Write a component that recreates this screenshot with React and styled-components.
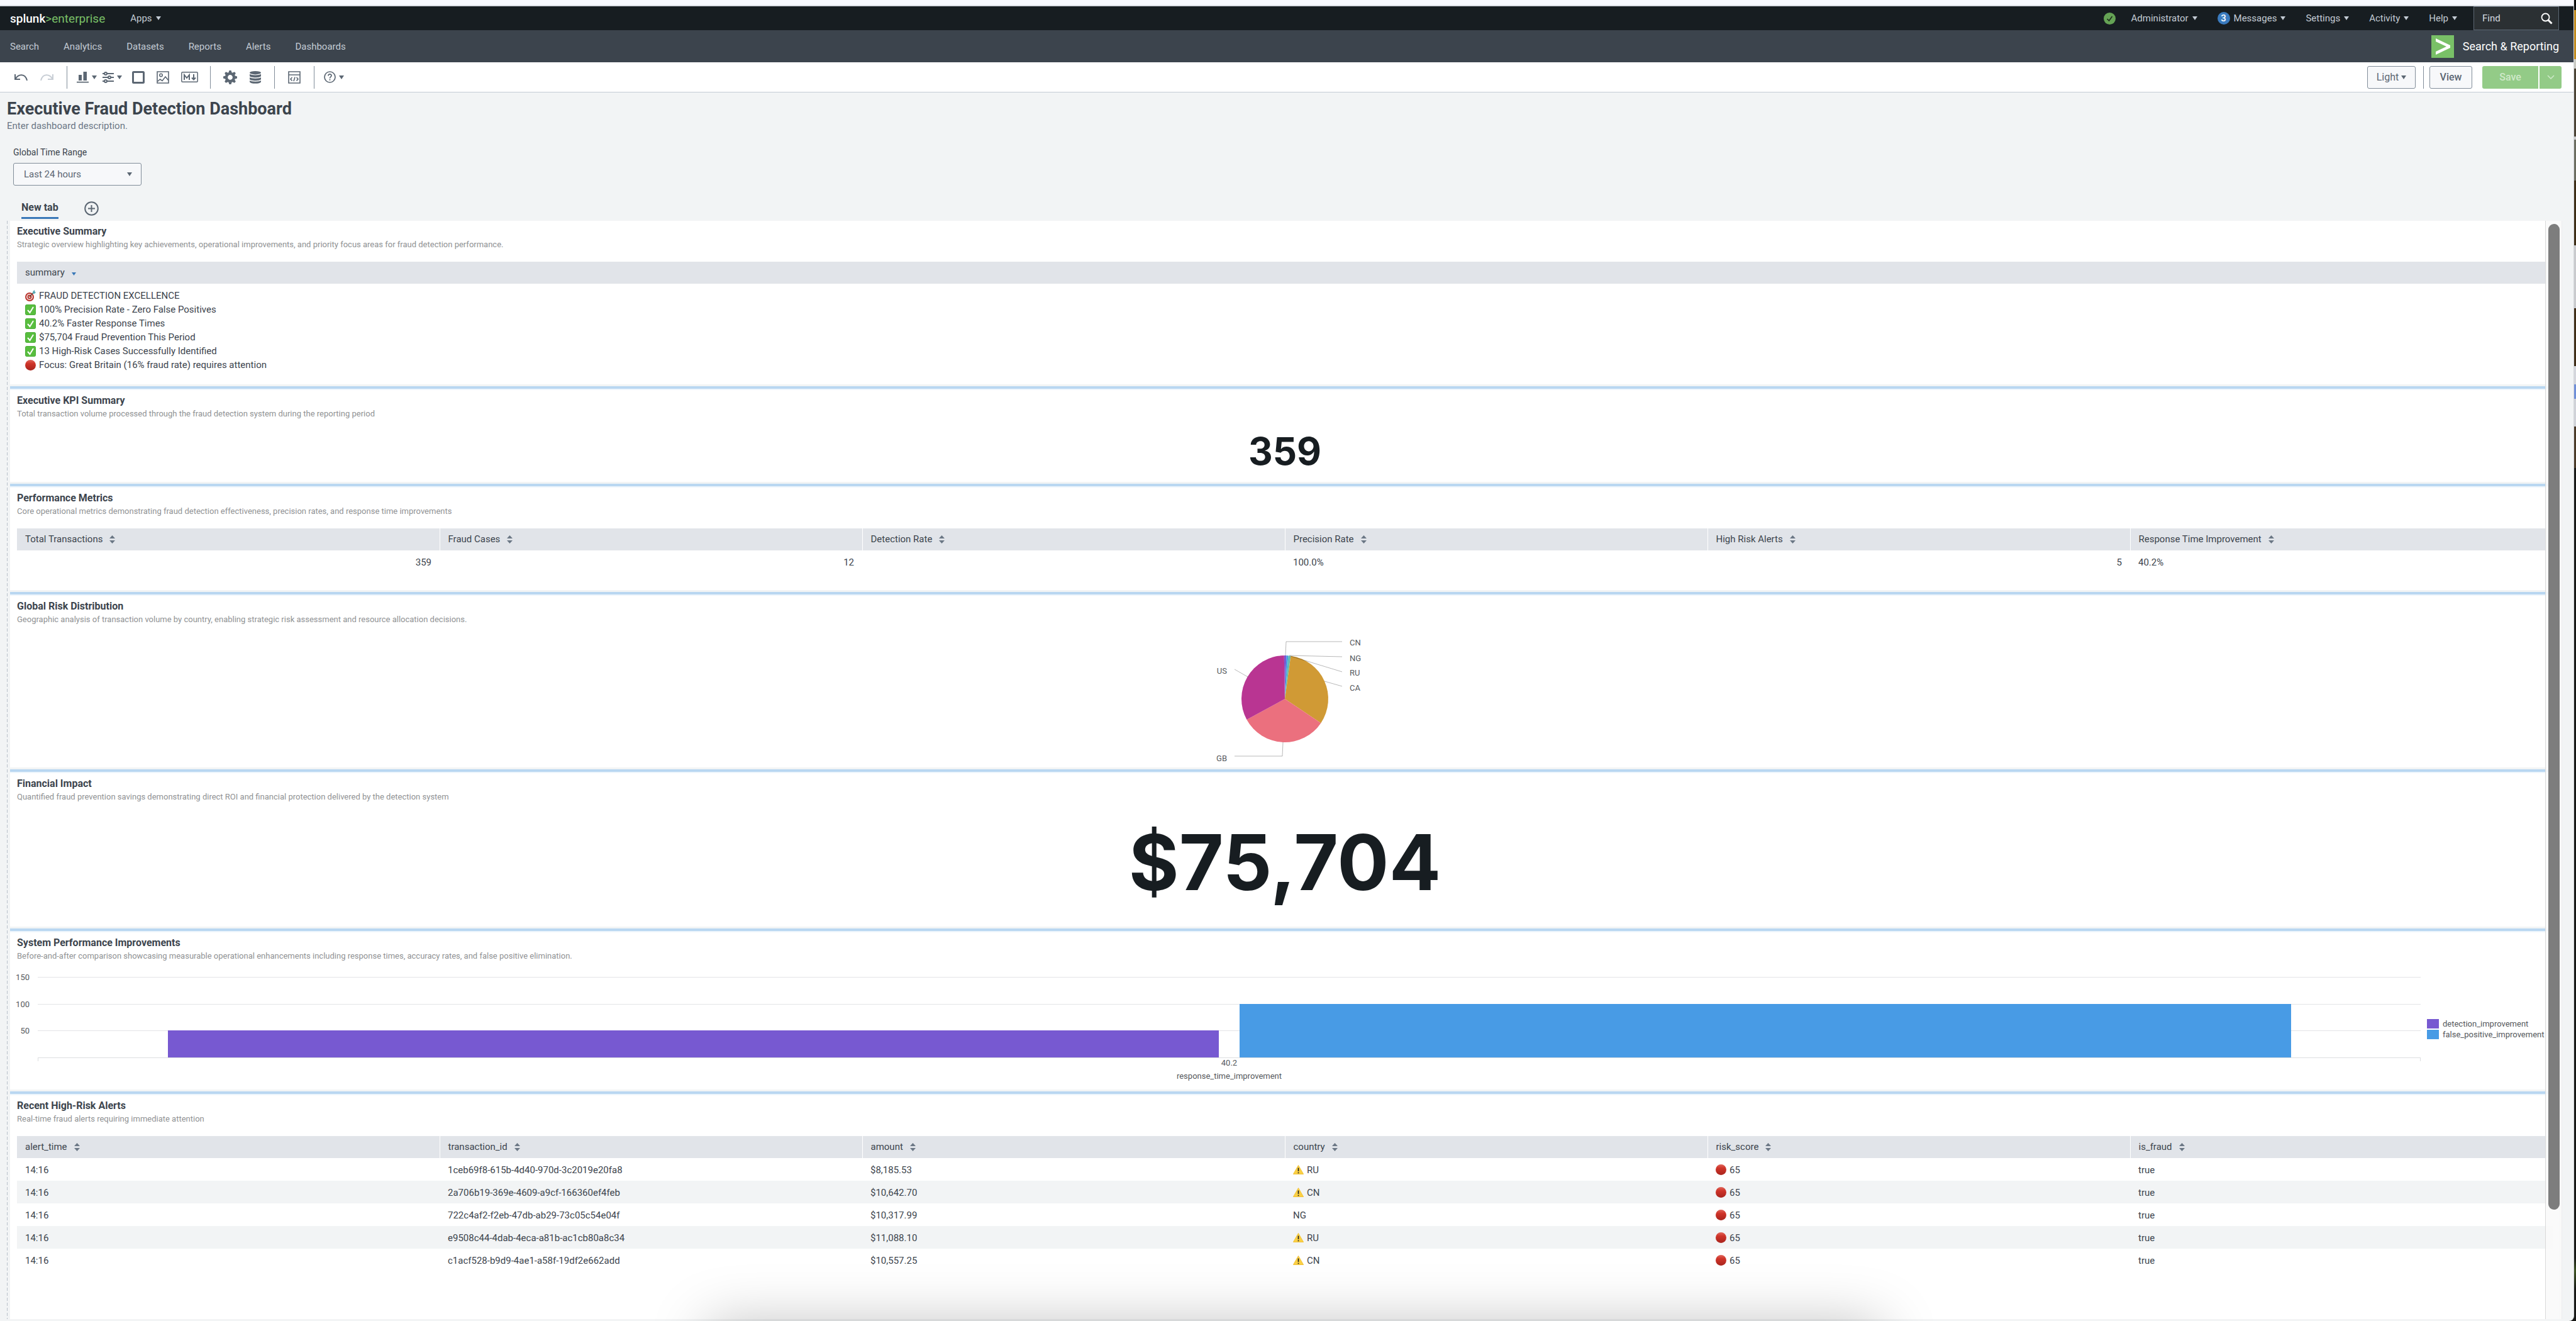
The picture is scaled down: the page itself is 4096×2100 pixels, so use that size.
import React from "react";
import styled, { createGlobalStyle } from "styled-components";

const GlobalStyle = createGlobalStyle`
  *, *::before, *::after { box-sizing: border-box; }
  html, body { margin: 0; background: #171816; }
  body, button, input, select { font-family: Roboto, "Liberation Sans", sans-serif; }
  button { margin: 0; padding: 0; border: 0; background: none; color: inherit; font-size: inherit; cursor: pointer; }
  a { color: inherit; text-decoration: none; }
  h1, h2, p { margin: 0; }
  svg { display: block; flex: none; }
`;

/* ---------- page frame ---------- */

const Page = styled.div`
  position: relative;
  display: flex;
  min-height: 100vh;
  overflow: hidden;
  color: #3c444d;
  font-size: 15px;
`;

const Window = styled.div`
  flex: 1;
  min-width: 0;
  display: flex;
  flex-direction: column;
  background: #f2f4f5;
  border-right: 1px solid #d5d8dc;
  border-bottom-right-radius: 8px;
`;

const Desktop = styled.div`
  width: 3px;
  background: linear-gradient(
    #0b0b0b 0 16px, #c08a1c 16px 94px, #c9c9c3 94px 109px, #4b4335 109px 217px,
    #cccccc 217px 222px, #6b6c60 222px 287px, #3d2e16 287px 390px, #c9cacd 390px 490px,
    #3f2e17 490px 582px, #d4d6dc 582px 611px, #6f8fd8 611px 634px, #d0d2d8 634px 678px,
    #4a3a28 678px 744px, #171816 744px 2000px, #3c5221 2020px, #171816 2050px
  );
`;

const DockShadow = styled.div`
  position: absolute;
  top: calc(100% + 4px);
  left: 27.5%;
  right: 27%;
  height: 100px;
  box-shadow: 0 0 90px rgba(0, 0, 0, 0.25);
  pointer-events: none;
`;

const BrowserEdge = styled.div`
  height: 10px;
  background: #f8f9fe;
  border-bottom: 2px solid #dde0e6;
`;

/* ---------- header ---------- */

const TopBar = styled.header`
  display: flex;
  align-items: center;
  height: 38px;
  padding: 0 23px 0 16px;
  background: #171d21;
  color: #c3cbd4;
`;

const Brand = styled.a`
  font-size: 19px;
  color: #79c067;
  margin-right: 40px;
`;

const BrandName = styled.span`
  color: #fff;
  font-weight: 500;
`;

const MenuButton = styled.button`
  display: flex;
  align-items: center;
  gap: 6px;
  line-height: 20px;
`;

const Spacer = styled.div`
  flex: 1;
`;

const TopMenu = styled.nav`
  display: flex;
  align-items: center;
  gap: 32px;
  margin-right: 26px;
`;

const Account = styled.div`
  display: flex;
  align-items: center;
  gap: 25px;
`;

const Badge = styled.span`
  width: 20px;
  height: 20px;
  border-radius: 50%;
  background: #3a7bbf;
  color: #fff;
  font-weight: 500;
  text-align: center;
`;

const FindBox = styled.form`
  display: flex;
  align-items: center;
  width: 136px;
  height: 38px;
  padding: 0 9px 0 13px;
  background: #2b3033;
  border: 1px solid #5c6773;
`;

const FindInput = styled.input`
  flex: 1;
  min-width: 0;
  padding: 0;
  border: 0;
  outline: 0;
  background: none;
  color: #e1e6eb;
  font-size: 15px;
  &::placeholder { color: #d5dae0; opacity: 1; }
`;

const NavBar = styled.nav`
  display: flex;
  align-items: center;
  gap: 39px;
  height: 51px;
  padding: 0 23px 0 16px;
  background: #3c444d;
  color: #c3cbd4;
`;

const AppName = styled.a`
  display: flex;
  align-items: center;
  gap: 14px;
  margin-left: auto;
  color: #fff;
  font-size: 18px;
`;

/* ---------- editor toolbar ---------- */

const Toolbar = styled.div`
  display: flex;
  align-items: center;
  height: 48px;
  padding: 0 19px 0 23px;
  background: #fff;
  border-bottom: 1px solid #c3cbd4;
  color: #5c6773;
`;

const ToolGroup = styled.div`
  display: flex;
  align-items: center;
  gap: ${(p) => p.$gap}px;
`;

const ToolButton = styled.button`
  display: flex;
  align-items: center;
  justify-content: center;
  gap: 5px;
  color: ${(p) => (p.disabled ? "#c8ced5" : "#5c6773")};
`;

const Divider = styled.span`
  flex: none;
  width: 1px;
  height: 36px;
  margin: 0 ${(p) => p.$after}px 0 ${(p) => p.$before}px;
  background: #818d99;
`;

const PlainButton = styled.button`
  display: flex;
  align-items: center;
  justify-content: center;
  gap: 4px;
  width: ${(p) => p.$width}px;
  height: 36px;
  border: 1px solid #818d99;
  border-radius: 3px;
  background: #f7f8fa;
  color: #5c6773;
  font-size: 16px;
  font-weight: ${(p) => (p.$strong ? 500 : 400)};
`;

const SaveGroup = styled.div`
  display: flex;
  gap: 2px;
  margin-left: 16px;
  border-radius: 3px;
  overflow: hidden;
`;

const SaveButton = styled.button`
  display: flex;
  align-items: center;
  justify-content: center;
  width: ${(p) => p.$width}px;
  height: 36px;
  background: #93cb87;
  color: #cfe9c9;
  font-size: 16px;
  font-weight: 500;
`;

/* ---------- dashboard head ---------- */

const Head = styled.div`
  padding: 10px 11px 0;
`;

const Title = styled.h1`
  font-size: 27px;
  line-height: 32px;
  font-weight: 700;
`;

const Description = styled.p`
  color: #6b7785;
  font-size: 15px;
  line-height: 22px;
`;

const Field = styled.div`
  display: flex;
  flex-direction: column;
  align-items: flex-start;
  gap: 8px;
  margin: 22px 0 25px 10px;
`;

const FieldLabel = styled.label`
  font-size: 14px;
  line-height: 18px;
`;

const SelectWrap = styled.div`
  position: relative;
  width: 204px;
`;

const Select = styled.select`
  appearance: none;
  width: 100%;
  height: 36px;
  padding: 0 16px;
  border: 1px solid #818d99;
  border-radius: 3px;
  background: #f7f8fa;
  color: #5c6773;
  font-size: 15px;
`;

const SelectCaret = styled.span`
  position: absolute;
  right: 15px;
  top: 15px;
  color: #5c6773;
  pointer-events: none;
`;

const Tabs = styled.div`
  display: flex;
  align-items: flex-start;
  gap: 41px;
  height: 31px;
`;

const Tab = styled.button`
  margin-left: 23px;
  padding-bottom: 6px;
  border-bottom: 3px solid #3a78b8;
  font-size: 16px;
  line-height: 19px;
  font-weight: 700;
`;

/* ---------- canvas ---------- */

const Viewport = styled.main`
  position: relative;
  flex: 1;
  display: flex;
  margin: 0 18px 3px 11px;
`;

const GridLine = styled.div`
  width: 1px;
  margin-right: 4px;
  background: repeating-linear-gradient(#b9c1ca 0 5px, transparent 5px 8px);
`;

const Canvas = styled.div`
  flex: 1;
  min-width: 0;
  display: flex;
  flex-direction: column;
  margin-right: 5px;
`;

const Scrollbar = styled.div`
  position: absolute;
  top: 0;
  right: 0;
  bottom: 0;
  width: 27px;
  padding: 5px 3px 0 4px;
  background: rgba(250, 250, 250, 0.9);
  border-left: 1px solid #d9d9d9;
  border-right: 1px solid #ececef;
`;

const Thumb = styled.div`
  height: 90%;
  border-radius: 9px;
  background: #7d7d7d;
`;

const Resizer = styled.div`
  height: 9px;
  border-top: 3px solid #f2f4f5;
  border-bottom: 2px solid #edf5fc;
  background: #b9d7f1;
`;

const PanelBox = styled.section`
  display: flex;
  flex-direction: column;
  flex: ${(p) => (p.$fill ? 1 : "none")};
  padding: 7px 10px 0 11px;
  background: #fff;
`;

const PanelTitle = styled.h2`
  font-size: 16px;
  line-height: 20px;
  font-weight: 700;
`;

const PanelText = styled.p`
  margin-top: 2px;
  color: #909294;
  font-size: 13px;
  line-height: 18px;
`;

const Centered = styled.div`
  display: flex;
  align-items: center;
  justify-content: center;
  height: ${(p) => p.$height}px;
  padding-bottom: ${(p) => p.$lift || 0}px;
`;

const BigNumber = styled.div`
  color: #171d21;
  font-family: Inter, sans-serif;
  font-size: ${(p) => p.$size}px;
  line-height: 1;
  font-weight: 700;
`;

/* ---------- tables ---------- */

const Table = styled.table`
  width: 100%;
  margin: 18px 0 ${(p) => p.$after || 0}px;
  border-collapse: collapse;
  table-layout: fixed;
`;

const Th = styled.th`
  height: 35px;
  padding: 0 13px 1px;
  background: #e1e4e9;
  font-weight: 400;
  text-align: left;
  & + & { border-left: 1px solid #fff; }
`;

const ThLabel = styled.span`
  display: flex;
  align-items: center;
  gap: 11px;
`;

const Tr = styled.tr`
  &:nth-child(even) { background: #f2f4f5; }
`;

const Td = styled.td`
  height: 36px;
  padding: 1px 13px 0;
  text-align: ${(p) => (p.$right ? "right" : "left")};
`;

const SummaryCell = styled.td`
  padding: 8px 13px 0;
`;

const Line = styled.div`
  display: flex;
  align-items: center;
  gap: 5px;
  line-height: 22px;
`;

/* ---------- bar chart ---------- */

const Chart = styled.div`
  display: flex;
  padding-top: 24px;
  height: 203px;
  color: #55585c;
  font-size: 13px;
`;

const YAxis = styled.div`
  display: flex;
  flex-direction: column;
  width: 20px;
  height: 128px;
  margin-right: 13px;
`;

const YLabel = styled.span`
  flex: 1;
  margin-top: -7px;
  margin-bottom: 7px;
  line-height: 16px;
  display: flex;
  justify-content: flex-end;
`;

const PlotColumn = styled.div`
  flex: 1;
  min-width: 0;
  text-align: center;
`;

const Plot = styled.div`
  display: grid;
  height: 128px;
`;

const GridRows = styled.div`
  grid-area: 1 / 1;
  display: flex;
  flex-direction: column;
`;

const GridRow = styled.div`
  flex: 1;
  border-top: 1px solid #e3e4e6;
`;

const Bars = styled.div`
  grid-area: 1 / 1;
  display: flex;
  align-items: flex-end;
  gap: 33px;
  padding: 0 5.45%;
`;

const Bar = styled.div`
  flex: 1;
  height: ${(p) => p.$value / 1.5}%;
  background: ${(p) => p.$color};
`;

const XAxis = styled.div`
  height: 6px;
  border: 1px solid #dcdee0;
  border-bottom: 0;
`;

const XLabel = styled.div`
  line-height: 16px;
  margin-top: ${(p) => p.$gap}px;
`;

const Legend = styled.ul`
  flex: 0 0 200px;
  margin: 66px 0 0 10px;
  padding: 0;
  list-style: none;
`;

const LegendItem = styled.li`
  display: flex;
  align-items: center;
  gap: 6px;
  height: 17px;
  white-space: nowrap;
`;

const Swatch = styled.span`
  flex: none;
  width: 19px;
  height: 15px;
  background: ${(p) => p.$color};
`;

/* ---------- icons ---------- */

const Caret = () => (
  <svg width="8" height="6" viewBox="0 0 8 6" fill="currentColor"><path d="M0 0h8L4 6z" /></svg>
);
const SortIcon = () => (
  <svg width="9" height="13" viewBox="0 0 9 13" fill="#6b7785"><path d="M4.500 0L9 5H0zM0 8h9l-4.500 5z" /></svg>
);
const SortedIcon = () => (
  <svg width="7" height="10" viewBox="0 0 7 10" fill="#3a78b8"><path d="M0 5h7L3.500 10z" /></svg>
);
const StatusOk = () => (
  <svg width="19" height="19" viewBox="0 0 19 19"><circle cx="9.500" cy="9.500" r="9.500" fill="#65a355" /><path d="M5.500 10l3 3 5-7" fill="none" stroke="#1d2b1c" strokeWidth="1.600" /></svg>
);
const SearchIcon = () => (
  <svg width="19" height="19" viewBox="0 0 19 19" fill="none" stroke="#fff"><circle cx="7.500" cy="7.500" r="6" strokeWidth="1.800" /><path d="M12 12l5.500 5.500" strokeWidth="3" /></svg>
);
const AppIcon = () => (
  <svg width="36" height="36" viewBox="0 0 36 36"><path fill="#79c067" d="M0 0h36v36H0z" /><path fill="#fff" d="M7 5l23 11v4L7 31v-5l17-8L7 10z" /></svg>
);
const UndoIcon = ({ flip }) => (
  <svg width="21" height="12" viewBox="0 0 21 12" fill="none" stroke="currentColor" strokeWidth="2">
    <g transform={flip ? "translate(21 0) scale(-1 1)" : undefined}><path d="M1 1v8h8M1.500 8.500C6 .5 17 -1 20 11" /></g>
  </svg>
);
const ChartIcon = () => (
  <svg width="19" height="19" viewBox="0 0 19 19" fill="currentColor"><path d="M3 6h5v9H3zM10.500 1H16v14h-5.500zM0 16.800h19v1.800H0z" /></svg>
);
const InputsIcon = () => (
  <svg width="18" height="18" viewBox="0 0 18 18" fill="none" stroke="currentColor" strokeWidth="2">
    <path d="M0 3h3M7 3h11M0 9h9M13 9h5M0 15h3M7 15h11" /><circle cx="5" cy="3" r="2" /><circle cx="11" cy="9" r="2" /><circle cx="5" cy="15" r="2" />
  </svg>
);
const ShapeIcon = () => (
  <svg width="20" height="20" viewBox="0 0 20 20" fill="none" stroke="currentColor" strokeWidth="3"><rect x="1.500" y="1.500" width="17" height="17" rx="1" /></svg>
);
const ImageIcon = () => (
  <svg width="20" height="20" viewBox="0 0 20 20" fill="none" stroke="currentColor" strokeWidth="1.600">
    <path d="M1 1h18v18H1z" /><circle cx="7" cy="6.500" r="2.200" /><path d="M1.500 16.500l4-3.500 3.500 2.500 5-6.500 5 6" />
  </svg>
);
const MarkdownIcon = () => (
  <svg width="27" height="17" viewBox="0 0 27 17" fill="none" stroke="currentColor">
    <rect x=".8" y=".8" width="25.400" height="15.400" rx="1.500" strokeWidth="1.500" />
    <path d="M5 13V5l4 5 4-5v8M20 4v8M17 9.500l3 3 3-3" strokeWidth="2" />
  </svg>
);
const GearIcon = () => (
  <svg width="22" height="22" viewBox="-11 -11 22 22">
    <circle r="6" fill="none" stroke="currentColor" strokeWidth="4.200" />
    {[0, 45, 90, 135, 180, 225, 270, 315].map((a) => (
      <path key={a} d="M-2.800 -7L-1.500 -11h3L2.800 -7z" fill="currentColor" transform={`rotate(${a})`} />
    ))}
  </svg>
);
const DatabaseIcon = () => (
  <svg width="18" height="20" viewBox="0 0 18 20" fill="currentColor">
    <ellipse cx="9" cy="2.700" rx="9" ry="2.700" />
    <path d="M0 4.800c3 2.200 15 2.200 18 0v3.200c-1 3-17 3-18 0zM0 10c3 2.200 15 2.200 18 0v3c-1 3-17 3-18 0zM0 15c3 2.200 15 2.200 18 0v2.300c-1 3.400-17 3.400-18 0z" />
  </svg>
);
const SourceIcon = () => (
  <svg width="20" height="20" viewBox="0 0 20 20" fill="none" stroke="currentColor" strokeWidth="1.600">
    <path d="M1 1h18v18H1zM1 6h18M6.500 10L4 12.700l2.500 2.700M13.500 10l2.500 2.700-2.500 2.700M11 9.500l-2 6.500" />
  </svg>
);
const HelpIcon = () => (
  <svg width="19" height="19" viewBox="0 0 19 19" fill="none" stroke="currentColor" strokeWidth="1.700">
    <circle cx="9.500" cy="9.500" r="8.500" /><path d="M7 7.500c0-3.400 5-3.300 5-.3 0 2-2.500 2-2.500 4.300M9.500 12.800v2" />
  </svg>
);
const PlusIcon = () => (
  <svg width="23" height="23" viewBox="0 0 23 23" fill="none" stroke="#5c6773" strokeWidth="2"><circle cx="11.500" cy="11.500" r="10.300" /><path d="M11.500 6v11M6 11.500h11" /></svg>
);
const ChevronIcon = () => (
  <svg width="12" height="7" viewBox="0 0 12 7" fill="none" stroke="currentColor" strokeWidth="1.500"><path d="M1 1l5 5 5-5" /></svg>
);

const TargetMark = () => (
  <svg width="17" height="18" viewBox="0 0 17 18">
    <circle cx="7" cy="11" r="7" fill="#b8332c" /><circle cx="7" cy="11" r="5" fill="#f3e6e2" /><circle cx="7" cy="11" r="3.400" fill="#b8332c" /><circle cx="7" cy="11" r="1.500" fill="#f3e6e2" />
    <path d="M7 11l6-7" stroke="#5b4636" strokeWidth="1.200" /><path d="M12 6l.5-4L15 0l.3 2.500L17 4l-2.500 2z" fill="#5aa9b5" />
  </svg>
);
const CheckMark = () => (
  <svg width="17" height="17" viewBox="0 0 17 17"><rect width="17" height="17" rx="3" fill="#3fa02f" /><rect x=".6" y=".6" width="15.800" height="15.800" rx="2.600" fill="#58bd3e" /><path d="M4 9l3.500 4L13 4" fill="none" stroke="#fff" strokeWidth="2" /></svg>
);
const RedMark = () => (
  <svg width="17" height="17" viewBox="0 0 17 17">
    <defs><linearGradient id="red" x1="0" y1="0" x2="0" y2="1"><stop offset="0" stopColor="#e0675c" /><stop offset=".35" stopColor="#cf3429" /><stop offset="1" stopColor="#a8241d" /></linearGradient></defs>
    <circle cx="8.500" cy="8.500" r="8.500" fill="url(#red)" />
  </svg>
);
const WarningMark = () => (
  <svg width="17" height="15" viewBox="0 0 17 15"><path d="M8.500 .5L16.600 14.500H.4z" fill="#fbd043" stroke="#f0c23c" strokeLinejoin="round" /><path d="M8.500 4.500v5.500M8.500 11.400v1.800" stroke="#222" strokeWidth="1.700" /></svg>
);
const marks = { target: TargetMark, check: CheckMark, red: RedMark, warning: WarningMark };

/* ---------- pie chart ---------- */

const slices = [
  { from: -1, to: 2, color: "#7759d1" },
  { from: 2, to: 4.500, color: "#489be5" },
  { from: 4.500, to: 7.800, color: "#5fbcb4" },
  { from: 7.800, to: 123.800, color: "#d09a35" },
  { from: 123.800, to: 241.500, color: "#eb707e" },
  { from: 241.500, to: 359, color: "#b93592" },
];
const leaders = ["1,-69 2,-91 91,-91", "7,-69 91,-67", "9,-68 91,-43", "63,-28 91,-20", "-59,-35 -80,-47", "-3,69 -4,91 -80,91"];
const pieLabels = [["CN", 103, -90], ["NG", 103, -65], ["RU", 103, -42], ["CA", 103, -18], ["US", -92, -45], ["GB", -92, 94]];

const PieSvg = styled.svg`
  width: 260px;
  height: 216px;
  text { font-size: 13px; fill: #55585c; dominant-baseline: central; }
`;

const arc = ({ from, to }) => {
  const at = (deg) => {
    const a = (deg * Math.PI) / 180;
    return `${69 * Math.sin(a)} ${-69 * Math.cos(a)}`;
  };
  return `M0 0L${at(from)}A69 69 0 0 1 ${at(to)}z`;
};

const Pie = () => (
  <PieSvg viewBox="-130 -112 260 216" role="img" aria-label="Transactions by country">
    {slices.map((s) => <path key={s.color} d={arc(s)} fill={s.color} />)}
    {leaders.map((p) => <polyline key={p} points={p} fill="none" stroke="#000" strokeOpacity=".28" />)}
    {pieLabels.map(([t, x, y]) => <text key={t} x={x} y={y} textAnchor={x < 0 ? "end" : "start"}>{t}</text>)}
  </PieSvg>
);

/* ---------- data ---------- */

const summary = [
  ["target", "FRAUD DETECTION EXCELLENCE"],
  ["check", "100% Precision Rate - Zero False Positives"],
  ["check", "40.2% Faster Response Times"],
  ["check", "$75,704 Fraud Prevention This Period"],
  ["check", "13 High-Risk Cases Successfully Identified"],
  ["red", "Focus: Great Britain (16% fraud rate) requires attention"],
];
const metricColumns = ["Total Transactions", "Fraud Cases", "Detection Rate", "Precision Rate", "High Risk Alerts", "Response Time Improvement"];
const metricRows = [[359, 12, "", "100.0%", 5, "40.2%"]];
const alertColumns = ["alert_time", "transaction_id", "amount", "country", "risk_score", "is_fraud"];
const alertRows = [
  ["1ceb69f8-615b-4d40-970d-3c2019e20fa8", "$8,185.53", "RU", true],
  ["2a706b19-369e-4609-a9cf-166360ef4feb", "$10,642.70", "CN", true],
  ["722c4af2-f2eb-47db-ab29-73c05c54e04f", "$10,317.99", "NG", false],
  ["e9508c44-4dab-4eca-a81b-ac1cb80a8c34", "$11,088.10", "RU", true],
  ["c1acf528-b9d9-4ae1-a58f-19df2e662add", "$10,557.25", "CN", true],
].map(([id, amount, country, warn]) => ["14:16", id, amount, warn ? { mark: "warning", text: country } : country, { mark: "red", text: "65" }, "true"]);
const series = [
  { name: "detection_improvement", value: 50, color: "#7759d1" },
  { name: "false_positive_improvement", value: 100, color: "#489be5" },
];

/* ---------- parts ---------- */

const Marked = ({ mark, children }) => {
  const Icon = marks[mark];
  return <Line><Icon />{children}</Line>;
};

const DataTable = ({ columns, rows, after }) => (
  <Table $after={after}>
    <thead><tr>{columns.map((c) => <Th key={c} scope="col"><ThLabel>{c}<SortIcon /></ThLabel></Th>)}</tr></thead>
    <tbody>
      {rows.map((row, i) => (
        <Tr key={i}>
          {row.map((v, j) => (
            <Td key={j} $right={typeof v === "number"}>{v && v.mark ? <Marked mark={v.mark}>{v.text}</Marked> : v}</Td>
          ))}
        </Tr>
      ))}
    </tbody>
  </Table>
);

const Panel = ({ title, text, children, last }) => (
  <>
    <PanelBox $fill={last}>
      <PanelTitle>{title}</PanelTitle>
      <PanelText>{text}</PanelText>
      {children}
    </PanelBox>
    {!last && <Resizer />}
  </>
);

const Menu = ({ children }) => <MenuButton type="button">{children}<Caret /></MenuButton>;

const Tool = ({ label, menu, disabled, children }) => (
  <ToolButton type="button" aria-label={label} disabled={disabled}>{children}{menu && <Caret />}</ToolButton>
);

export default function App() {
  return (
    <Page>
      <GlobalStyle />
      <Window>
        <BrowserEdge />
        <TopBar>
          <Brand href="#"><BrandName>splunk</BrandName>&gt;enterprise</Brand>
          <Menu>Apps</Menu>
          <Spacer />
          <TopMenu>
            <Account><StatusOk /><Menu>Administrator</Menu></Account>
            <Menu><Badge>3</Badge>Messages</Menu>
            <Menu>Settings</Menu>
            <Menu>Activity</Menu>
            <Menu>Help</Menu>
          </TopMenu>
          <FindBox role="search">
            <FindInput type="text" placeholder="Find" aria-label="Find" />
            <button type="button" aria-label="Search"><SearchIcon /></button>
          </FindBox>
        </TopBar>
        <NavBar>
          {["Search", "Analytics", "Datasets", "Reports", "Alerts", "Dashboards"].map((n) => <a key={n} href="#">{n}</a>)}
          <AppName href="#"><AppIcon />Search &amp; Reporting</AppName>
        </NavBar>
        <Toolbar>
          <ToolGroup $gap={20}>
            <Tool label="Undo"><UndoIcon /></Tool>
            <Tool label="Redo" disabled><UndoIcon flip /></Tool>
          </ToolGroup>
          <Divider $before={21} $after={15} />
          <ToolGroup $gap={16}>
            <ToolGroup $gap={9}>
              <Tool label="Add chart" menu><ChartIcon /></Tool>
              <Tool label="Add input" menu><InputsIcon /></Tool>
            </ToolGroup>
            <ToolGroup $gap={19}>
              <Tool label="Add shape"><ShapeIcon /></Tool>
              <Tool label="Add image"><ImageIcon /></Tool>
              <Tool label="Add text"><MarkdownIcon /></Tool>
            </ToolGroup>
          </ToolGroup>
          <Divider $before={19} $after={20} />
          <ToolGroup $gap={20}>
            <Tool label="Settings"><GearIcon /></Tool>
            <Tool label="Data sources"><DatabaseIcon /></Tool>
          </ToolGroup>
          <Divider $before={21} $after={21} />
          <Tool label="Source"><SourceIcon /></Tool>
          <Divider $before={21} $after={15} />
          <Tool label="Help" menu><HelpIcon /></Tool>
          <Spacer />
          <PlainButton type="button" $width={77}>Light<Caret /></PlainButton>
          <Divider $before={12} $after={9} />
          <PlainButton type="button" $width={68} $strong>View</PlainButton>
          <SaveGroup>
            <SaveButton type="button" $width={89}>Save</SaveButton>
            <SaveButton type="button" $width={35} aria-label="More save options"><ChevronIcon /></SaveButton>
          </SaveGroup>
        </Toolbar>

        <Head>
          <Title>Executive Fraud Detection Dashboard</Title>
          <Description>Enter dashboard description.</Description>
          <Field>
            <FieldLabel htmlFor="time-range">Global Time Range</FieldLabel>
            <SelectWrap>
              <Select id="time-range" defaultValue="24h"><option value="24h">Last 24 hours</option></Select>
              <SelectCaret><Caret /></SelectCaret>
            </SelectWrap>
          </Field>
          <Tabs>
            <Tab type="button">New tab</Tab>
            <button type="button" aria-label="Add tab"><PlusIcon /></button>
          </Tabs>
        </Head>

        <Viewport>
          <GridLine />
          <Canvas>
            <Panel title="Executive Summary" text="Strategic overview highlighting key achievements, operational improvements, and priority focus areas for fraud detection performance.">
              <Table $after={20}>
                <thead><tr><Th scope="col"><ThLabel>summary<SortedIcon /></ThLabel></Th></tr></thead>
                <tbody><tr><SummaryCell>{summary.map(([m, t]) => <Marked key={t} mark={m}>{t}</Marked>)}</SummaryCell></tr></tbody>
              </Table>
            </Panel>
            <Panel title="Executive KPI Summary" text="Total transaction volume processed through the fraud detection system during the reporting period">
              <Centered $height={99}><BigNumber $size={60}>359</BigNumber></Centered>
            </Panel>
            <Panel title="Performance Metrics" text="Core operational metrics demonstrating fraud detection effectiveness, precision rates, and response time improvements">
              <DataTable columns={metricColumns} rows={metricRows} after={27} />
            </Panel>
            <Panel title="Global Risk Distribution" text="Geographic analysis of transaction volume by country, enabling strategic risk assessment and resource allocation decisions.">
              <Centered $height={226}><Pie /></Centered>
            </Panel>
            <Panel title="Financial Impact" text="Quantified fraud prevention savings demonstrating direct ROI and financial protection delivered by the detection system">
              <Centered $height={197} $lift={8}><BigNumber $size={122}>$75,704</BigNumber></Centered>
            </Panel>
            <Panel title="System Performance Improvements" text="Before-and-after comparison showcasing measurable operational enhancements including response times, accuracy rates, and false positive elimination.">
              <Chart>
                <YAxis>{[150, 100, 50].map((n) => <YLabel key={n}>{n}</YLabel>)}</YAxis>
                <PlotColumn>
                  <Plot>
                    <GridRows><GridRow /><GridRow /><GridRow /></GridRows>
                    <Bars>{series.map((s) => <Bar key={s.name} $value={s.value} $color={s.color} />)}</Bars>
                  </Plot>
                  <XAxis />
                  <XLabel $gap={-5}>40.2</XLabel>
                  <XLabel $gap={5}>response_time_improvement</XLabel>
                </PlotColumn>
                <Legend>{series.map((s) => <LegendItem key={s.name}><Swatch $color={s.color} />{s.name}</LegendItem>)}</Legend>
              </Chart>
            </Panel>
            <Panel last title="Recent High-Risk Alerts" text="Real-time fraud alerts requiring immediate attention">
              <DataTable columns={alertColumns} rows={alertRows} />
            </Panel>
          </Canvas>
          <Scrollbar><Thumb /></Scrollbar>
        </Viewport>
      </Window>
      <Desktop />
      <DockShadow />
    </Page>
  );
}
